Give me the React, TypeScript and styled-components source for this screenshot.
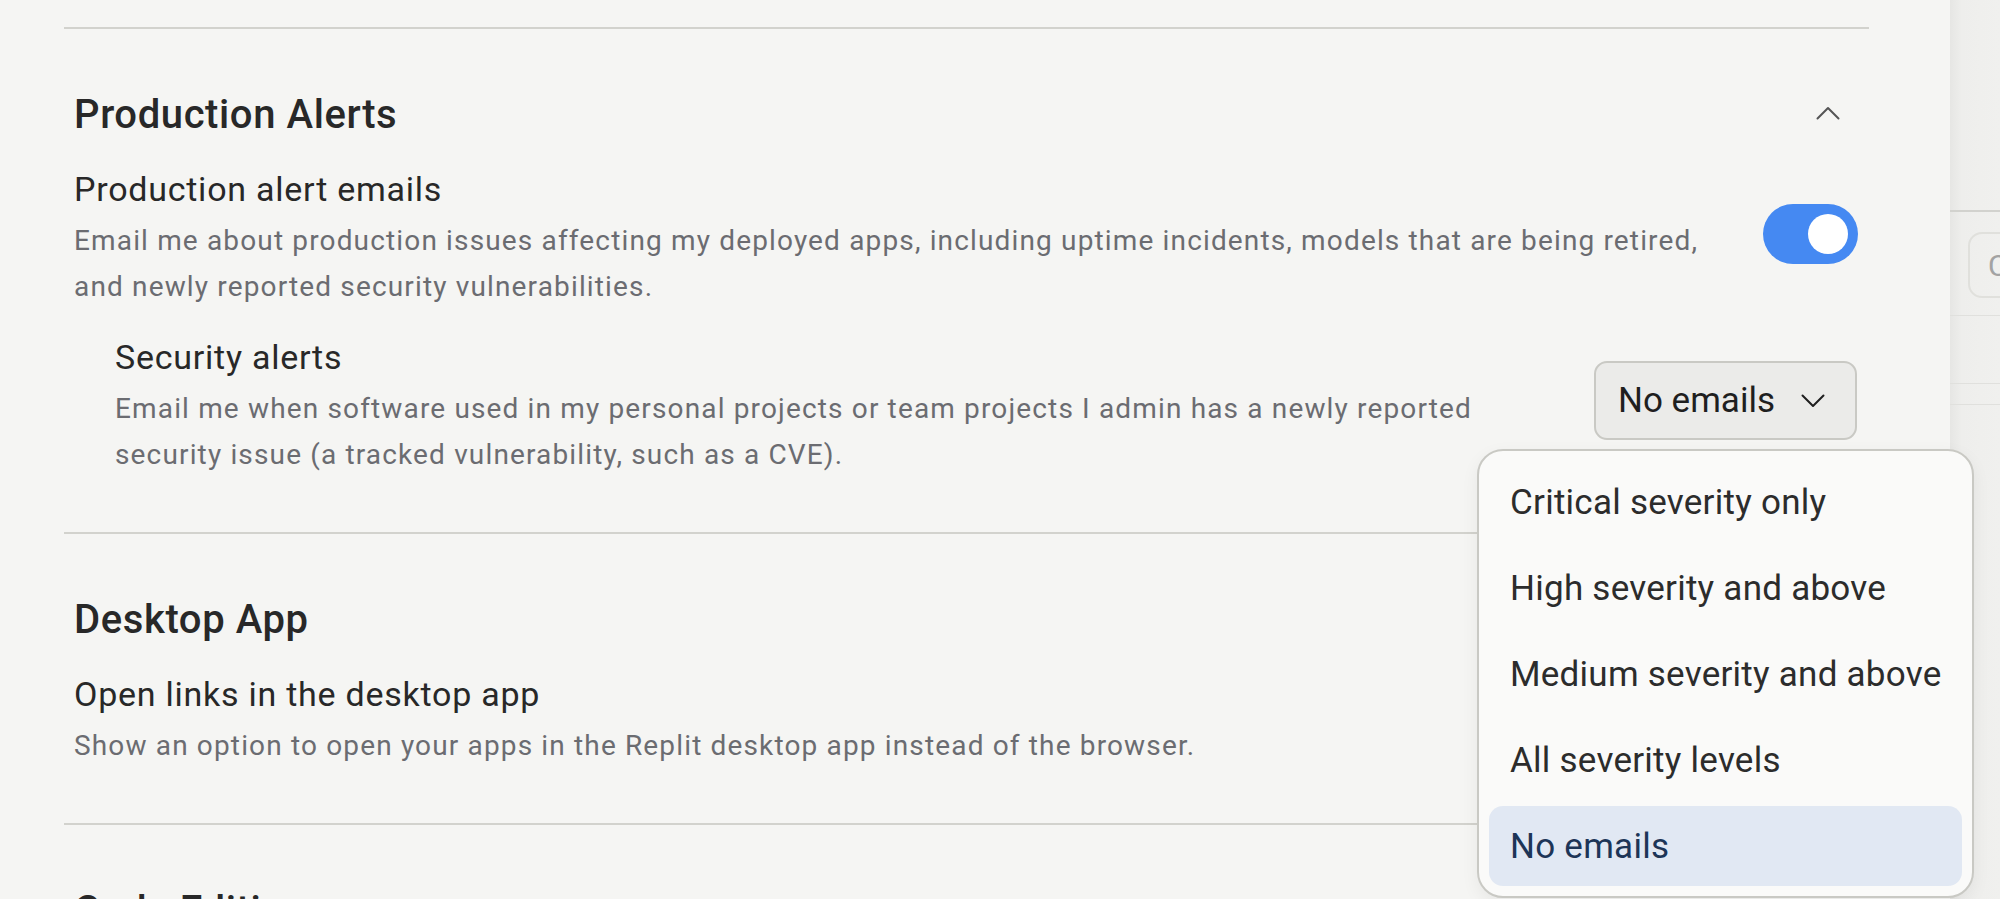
import * as React from 'react';
import styled, { createGlobalStyle } from 'styled-components';

const GlobalStyle = createGlobalStyle`
	html, body {
		margin: 0;
		padding: 0;
		background: #f5f5f3;
	}
	body {
		font-family: Roboto, 'Liberation Sans', sans-serif;
		color: #2a2a2a;
		-webkit-font-smoothing: antialiased;
	}
	* {
		box-sizing: border-box;
	}
`;

const Page = styled.div`
	display: flex;
	height: 899px;
	overflow: hidden;
`;

const Main = styled.main`
	width: 1950px;
	flex-shrink: 0;
	padding: 27px 81px 0 64px;
`;

const Section = styled.section`
	border-top: 2px solid #d2d2cd;
	padding: 60px 11px 54px 10px;
`;

const SectionHeader = styled.div`
	display: flex;
	align-items: center;
	justify-content: space-between;
	margin-bottom: 26px;
`;

const SectionTitle = styled.h2`
	margin: 0;
	font-size: 40px;
	line-height: 52px;
	font-weight: 500;
	letter-spacing: 0.6px;
	color: #282828;
`;

const CollapseButton = styled.button`
	width: 40px;
	height: 40px;
	margin: -5px 10px 0 0;
	padding: 0;
	border: none;
	background: none;
	display: flex;
	align-items: center;
	justify-content: center;
	color: #555;
	cursor: pointer;
`;

const SettingRow = styled.div<{ $nested?: boolean }>`
	display: flex;
	align-items: center;
	justify-content: space-between;
	padding-left: ${(p) => (p.$nested ? '41px' : '0')};
	margin-top: ${(p) => (p.$nested ? '25px' : '0')};
`;

const SettingText = styled.div<{ $gap: number }>`
	flex: 1;
	min-width: 0;
	margin-right: ${(p) => p.$gap}px;
	display: flex;
	flex-direction: column;
	gap: 7px;
`;

const SettingLabel = styled.div`
	font-size: 34px;
	line-height: 44px;
	letter-spacing: 0.75px;
	color: #282828;
`;

const SettingDesc = styled.div`
	font-size: 28px;
	line-height: 46px;
	letter-spacing: 1.15px;
	color: #6b6c71;
`;

const Toggle = styled.button<{ $on: boolean }>`
	width: 95px;
	height: 60px;
	margin-bottom: 9px;
	border-radius: 30px;
	border: none;
	padding: 10px;
	flex-shrink: 0;
	display: flex;
	align-items: center;
	justify-content: ${(p) => (p.$on ? 'flex-end' : 'flex-start')};
	background: ${(p) => (p.$on ? '#4589f2' : '#c9c9c5')};
	cursor: pointer;
`;

const Knob = styled.span`
	width: 40px;
	height: 40px;
	border-radius: 50%;
	background: #fff;
`;

const SelectWrap = styled.div`
	position: relative;
	flex-shrink: 0;
	margin: 0 1px 12px 0;
`;

const SelectButton = styled.button`
	width: 263px;
	height: 79px;
	padding: 0 30px 0 22px;
	display: flex;
	align-items: center;
	justify-content: space-between;
	border: 2px solid #c9c9c4;
	border-radius: 13px;
	background: #ebebe9;
	font-family: inherit;
	font-size: 35px;
	color: #1f1f1f;
	cursor: pointer;
`;

const Menu = styled.ul`
	position: absolute;
	top: calc(100% + 9px);
	left: -117px;
	width: 497px;
	margin: 0;
	padding: 11px 10px 10px;
	list-style: none;
	display: flex;
	flex-direction: column;
	gap: 6px;
	background: #fafaf9;
	border: 2px solid #c9c9c4;
	border-radius: 26px;
	box-shadow: 0 6px 18px rgba(0, 0, 0, 0.06);
	z-index: 10;
`;

const MenuItem = styled.li<{ $selected?: boolean }>`
	height: 80px;
	padding: 0 21px;
	display: flex;
	align-items: center;
	border-radius: 14px;
	font-size: 35px;
	letter-spacing: 0.25px;
	color: ${(p) => (p.$selected ? '#1d3557' : '#2c2c2c')};
	background: ${(p) => (p.$selected ? '#e1e8f3' : 'transparent')};
	white-space: nowrap;
`;

// the neighbouring panel peeking in at the right edge
const SidePanel = styled.aside`
	flex: 1;
	overflow: hidden;
	background: linear-gradient(to right, #e6e6e4 0px, #eeeeec 12px, #f0f0ee 100%);
`;

const SideHeader = styled.div`
	height: 212px;
	border-bottom: 2px solid #d2d2ce;
`;

const SideSearchRow = styled.div`
	padding: 20px 0 17px 18px;
	border-bottom: 1px solid #e0e0dd;
`;

const SideSearch = styled.div`
	width: 120px;
	height: 66px;
	border: 2px solid #e0e0dc;
	border-radius: 14px;
	padding-left: 18px;
	display: flex;
	align-items: center;
	font-size: 30px;
	color: #a3a3a3;
`;

const SideRow = styled.div<{ $h: number }>`
	height: ${(p) => p.$h}px;
	border-bottom: 1px solid #e0e0dd;
`;

const Chevron = ({ up }: { up?: boolean }) => (
	<svg width="24" height="14" viewBox="0 0 24 14" fill="none">
		<polyline
			points={up ? '1.5,12.5 12,2 22.5,12.5' : '1.5,1.5 12,12 22.5,1.5'}
			stroke="currentColor"
			strokeWidth="2"
			strokeLinecap="round"
			strokeLinejoin="round"
		/>
	</svg>
);

const severityOptions = [
	'Critical severity only',
	'High severity and above',
	'Medium severity and above',
	'All severity levels',
	'No emails',
];

export default function App() {
	const [alertsOn, setAlertsOn] = React.useState(true);
	const [severity] = React.useState('No emails');

	return (
		<>
			<GlobalStyle />
			<Page>
				<Main>
					<Section>
						<SectionHeader>
							<SectionTitle>Production Alerts</SectionTitle>
							<CollapseButton aria-label="Collapse">
								<Chevron up />
							</CollapseButton>
						</SectionHeader>
						<SettingRow>
							<SettingText $gap={30}>
								<SettingLabel>Production alert emails</SettingLabel>
								<SettingDesc>
									Email me about production issues affecting my deployed apps, including uptime incidents, models that are being retired, and newly reported security vulnerabilities.
								</SettingDesc>
							</SettingText>
							<Toggle $on={alertsOn} onClick={() => setAlertsOn(!alertsOn)} aria-label="Production alert emails">
								<Knob />
							</Toggle>
						</SettingRow>
						<SettingRow $nested>
							<SettingText $gap={70}>
								<SettingLabel>Security alerts</SettingLabel>
								<SettingDesc>
									Email me when software used in my personal projects or team projects I admin has a newly reported security issue (a tracked vulnerability, such as a CVE).
								</SettingDesc>
							</SettingText>
							<SelectWrap>
								<SelectButton>
									{severity}
									<Chevron />
								</SelectButton>
								<Menu>
									{severityOptions.map((o) => (
										<MenuItem key={o} $selected={o === severity}>
											{o}
										</MenuItem>
									))}
								</Menu>
							</SelectWrap>
						</SettingRow>
					</Section>
					<Section>
						<SectionHeader>
							<SectionTitle>Desktop App</SectionTitle>
						</SectionHeader>
						<SettingRow>
							<SettingText $gap={30}>
								<SettingLabel>Open links in the desktop app</SettingLabel>
								<SettingDesc>Show an option to open your apps in the Replit desktop app instead of the browser.</SettingDesc>
							</SettingText>
						</SettingRow>
					</Section>
					<Section>
						<SectionHeader>
							<SectionTitle>Code Editing</SectionTitle>
						</SectionHeader>
					</Section>
				</Main>
				<SidePanel>
					<SideHeader />
					<SideSearchRow>
						<SideSearch>Co</SideSearch>
					</SideSearchRow>
					<SideRow $h={68} />
					<SideRow $h={21} />
				</SidePanel>
			</Page>
		</>
	);
}
